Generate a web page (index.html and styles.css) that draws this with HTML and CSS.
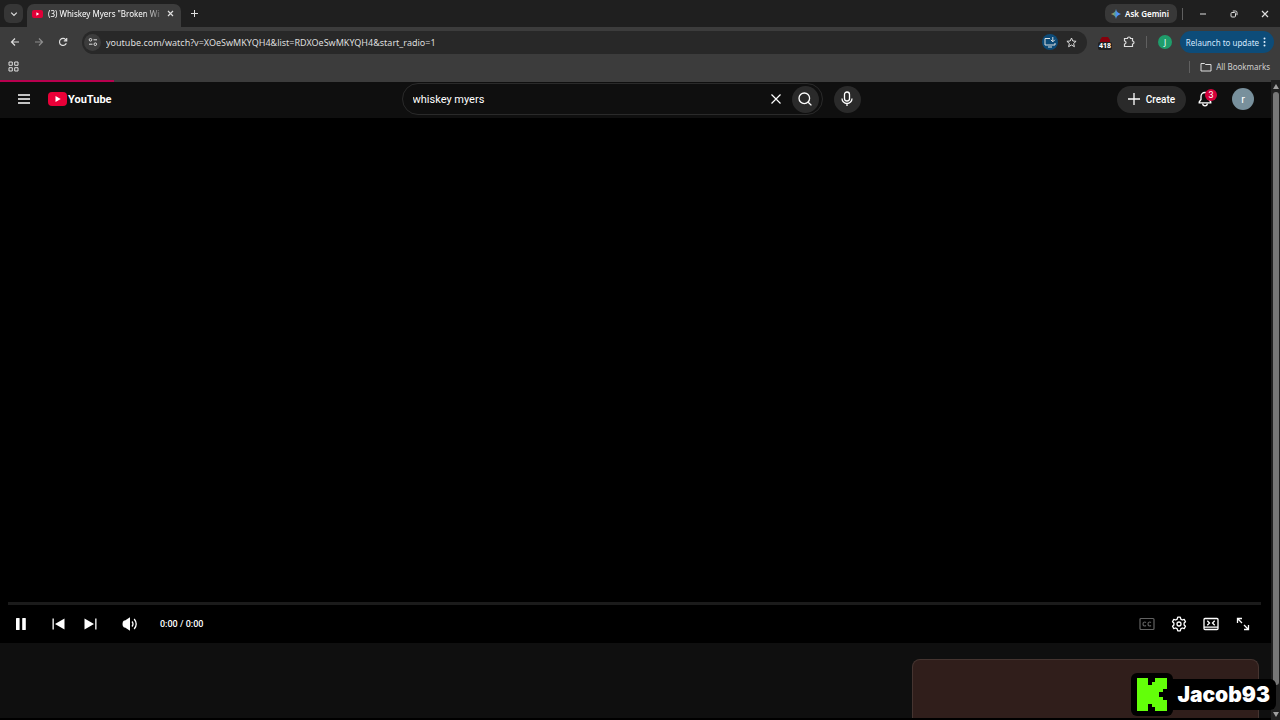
FILE: index.html
```html
<!DOCTYPE html>
<html lang="en">
<head>
<meta charset="utf-8">
<title>YouTube</title>
<link rel="stylesheet" href="styles.css">
</head>
<body>
<div class="tabstrip">
  <button class="tab-search" aria-label="Search tabs"><svg width="8" height="8" viewBox="0 0 8 8"><path d="M1.200 2.600 4 5.400l2.800-2.800" class="line strong"/></svg></button>
  <div class="tab">
    <svg width="11" height="8" viewBox="0 0 11 8"><rect width="11" height="8" rx="2" fill="#e00038"/><path d="M4.400 2.300v3.400L7.200 4z" fill="#fff"/></svg>
    <span class="tab-title">(3) Whiskey Myers "Broken Win</span>
    <button class="tab-close" aria-label="Close tab"><svg width="7" height="7" viewBox="0 0 7 7"><path d="m1 1 5 5M6 1 1 6" class="line strong"/></svg></button>
  </div>
  <button class="new-tab" aria-label="New tab"><svg width="9" height="9" viewBox="0 0 9 9"><path d="M4.500 1v7M1 4.500h7" class="line"/></svg></button>
  <div class="window-tools">
    <button class="gemini"><svg width="10" height="10" viewBox="0 0 10 10"><defs><linearGradient id="gem" x1="0" y1="0" x2="1" y2="0"><stop offset="0" stop-color="#e8a33c"/><stop offset=".35" stop-color="#5b9f8e"/><stop offset=".6" stop-color="#4b8df8"/><stop offset="1" stop-color="#5aa5ff"/></linearGradient></defs><path d="M5 0c.6 2.800 2.200 4.400 5 5-2.800.6-4.400 2.200-5 5-.6-2.800-2.200-4.400-5-5 2.800-.6 4.400-2.200 5-5z" fill="url(#gem)"/></svg>Ask Gemini</button>
    <span class="divider"></span>
    <button class="win" aria-label="Minimize"><svg width="8" height="8" viewBox="0 0 8 8"><path d="M1 4h6" class="line"/></svg></button>
    <button class="win" aria-label="Restore"><svg width="8" height="8" viewBox="0 0 8 8"><rect x="1" y="2.500" width="4.500" height="4.500" rx="1" class="line"/><path d="M2.800 1h2.700Q7 1 7 2.500v2.700" class="line"/></svg></button>
    <button class="win" aria-label="Close"><svg width="8" height="8" viewBox="0 0 8 8"><path d="m1 1 6 6M7 1 1 7" class="line strong"/></svg></button>
  </div>
</div>
<div class="toolbar">
  <button class="nav" aria-label="Back"><svg width="10" height="10" viewBox="0 0 10 10"><path d="M9 5H1.500M5 1.500 1.500 5 5 8.500" class="line strong"/></svg></button>
  <button class="nav dim" aria-label="Forward"><svg width="10" height="10" viewBox="0 0 10 10"><path d="M1 5h7.500M5 1.500 8.500 5 5 8.500" class="line strong"/></svg></button>
  <button class="nav" aria-label="Reload"><svg width="10" height="10" viewBox="0 0 10 10"><path d="M8.300 6.200A3.500 3.500 0 1 1 7.700 2.700L8.700 3.700M8.700 1v2.900H5.800" class="line strong"/></svg></button>
  <div class="address">
    <button class="site" aria-label="Site information"><svg width="10" height="10" viewBox="0 0 10 10"><circle cx="2.500" cy="2.800" r="1.300" class="line"/><path d="M5.500 2.800H9M1 7.200h3.500" class="line"/><circle cx="7.300" cy="7.200" r="1.300" class="line"/></svg></button>
    <input class="url" aria-label="Address" value="youtube.com/watch?v=XOeSwMKYQH4&amp;list=RDXOeSwMKYQH4&amp;start_radio=1">
    <button class="install" aria-label="Install app"><svg width="12" height="11" viewBox="0 0 12 11"><path d="M6 1.500H1v6.500h10V6M4 10h4M8.800 0v4.500M6.800 2.800l2 2 2-2" class="line"/></svg></button>
    <button class="star" aria-label="Bookmark this tab"><svg width="11" height="11" viewBox="0 0 11 11"><path d="m5.500 1 1.300 3 3.300.3-2.500 2.200.8 3.200-2.900-1.700-2.900 1.700.8-3.200L.9 4.300 4.200 4z" class="line"/></svg></button>
  </div>
  <button class="ext" aria-label="Ad blocker"><svg width="10" height="5" viewBox="0 0 10 5"><path d="M2 0h6l2 3v2H0V3z" fill="#86000c"/></svg><span>418</span></button>
  <button class="nav" aria-label="Extensions"><svg width="12" height="12" viewBox="0 0 12 12"><path d="M1.500 2.500h3Q4.500 1 6 1t1.500 1.500h2V5Q11 5 11 6.500T9.500 8v2.500h-8V8Q3 8 3 6.500T1.500 5z" class="line strong"/></svg></button>
  <span class="divider"></span>
  <button class="profile" aria-label="Profile">J</button>
  <button class="relaunch">Relaunch to update<svg width="3" height="10" viewBox="0 0 3 10" fill="#e4f1ff"><circle cx="1.500" cy="1.500" r="1"/><circle cx="1.500" cy="5" r="1"/><circle cx="1.500" cy="8.500" r="1"/></svg></button>
</div>
<div class="bookmarks">
  <button class="nav" aria-label="Apps"><svg width="11" height="11" viewBox="0 0 11 11"><path d="M1 1h3.300v3.300H1zM6.700 1H10v3.300H6.700zM1 6.700h3.300V10H1zM6.700 6.700H10V10H6.700z" class="line"/></svg></button>
  <span class="divider push"></span>
  <button class="all"><svg width="12" height="10" viewBox="0 0 12 10"><path d="M1 1.500h3.500l1 1H11V9H1z" class="line"/></svg>All Bookmarks</button>
</div>
<div class="view">
  <div class="page">
    <div class="track"><div class="loading"></div></div>
    <header class="masthead">
      <div class="brand">
        <button class="menu" aria-label="Guide"><svg width="12" height="10" viewBox="0 0 12 10"><path d="M0 1h12M0 5h12M0 9h12" stroke="#fff" stroke-width="1.400"/></svg></button>
        <a class="logo" href="#"><svg width="19" height="14" viewBox="0 0 19 14"><rect width="19" height="14" rx="4" fill="#e90038"/><path d="M7.500 4v6L12.700 7z" fill="#fff"/></svg>YouTube</a>
      </div>
      <div class="finder">
        <form class="search">
          <input class="query" aria-label="Search" value="whiskey myers">
          <button type="button" class="clear" aria-label="Clear"><svg width="12" height="12" viewBox="0 0 12 12"><path d="m1.500 1.500 9 9M10.500 1.500l-9 9" stroke="#fff" stroke-width="1.200"/></svg></button>
          <button type="button" class="go" aria-label="Search"><svg width="14" height="14" viewBox="0 0 14 14"><circle cx="6.300" cy="6.300" r="5.300" class="white"/><path d="m10.200 10.200 3.200 3.200" class="white"/></svg></button>
        </form>
        <button class="mic" aria-label="Voice search"><svg width="12" height="16" viewBox="0 0 12 16"><rect x="3.500" y="1" width="5" height="9" rx="2.500" class="white"/><path d="M1 7.500a5 5 0 0 0 10 0M6 12.500V15" class="white"/></svg></button>
      </div>
      <div class="account">
        <button class="create"><svg width="12" height="12" viewBox="0 0 12 12"><path d="M6 0v12M0 6h12" stroke="#fff" stroke-width="1.300"/></svg>Create</button>
        <button class="bell" aria-label="Notifications"><svg width="14" height="16" viewBox="0 0 14 16"><path d="M7 1.500c-2.500 0-4 1.800-4 4V8.500L1.200 11v.8h11.600V11L11 8.500v-3C11 3.300 9.500 1.500 7 1.500z" class="white"/><path d="M4.700 12.500a2.300 2.300 0 0 0 4.600 0" class="white"/></svg><span class="count">3</span></button>
        <button class="avatar" aria-label="Account">r</button>
      </div>
    </header>
    <main class="player">
      <div class="progress"></div>
      <div class="controls">
        <button class="pause" aria-label="Pause"><svg width="10" height="12" viewBox="0 0 10 12" fill="#fff"><rect width="3.600" height="12" rx=".6"/><rect x="6.200" width="3.600" height="12" rx=".6"/></svg></button>
        <button class="prev" aria-label="Previous"><svg width="13" height="12" viewBox="0 0 13 12" fill="#fff"><path d="M.5.5h1.300v11H.5zM12.500.5v11L3 6z"/></svg></button>
        <button class="next" aria-label="Next"><svg width="13" height="12" viewBox="0 0 13 12" fill="#fff"><path d="M11.200.5h1.300v11h-1.300zM.5.5v11L10 6z"/></svg></button>
        <button class="volume" aria-label="Mute"><svg width="16" height="14" viewBox="0 0 16 14"><path d="M8 .3v13.400L3 10.500H2Q.5 10 .5 7T2 3.500h1z" fill="#fff"/><path d="M10 4.500q2 2.500 0 5M12.200 2q4 5 0 10" class="white"/></svg></button>
        <span class="time">0:00 / 0:00</span>
        <div class="options">
          <button aria-label="Subtitles"><svg width="16" height="14" viewBox="0 0 16 14" fill="none" stroke="#626262" stroke-width="1.200"><rect x="1" y="1.500" width="14" height="11" rx="1"/><path d="M7 5.500Q6.500 5 5.500 5 4 5 4 7t1.500 2Q6.500 9 7 8.500M12 5.500Q11.500 5 10.500 5 9 5 9 7t1.500 2q1 0 1.500-.5"/></svg></button>
          <button aria-label="Settings"><svg width="16" height="16" viewBox="0 0 16 16"><path d="M6.700 1.200h2.600l.5 1.900 1.500.9 1.900-.6 1.300 2.300L13.100 7v2l1.400 1.300-1.300 2.300-1.900-.6-1.500.9-.5 1.900H6.700l-.5-1.900-1.500-.9-1.900.6-1.300-2.300L2.900 9V7L1.500 5.700l1.300-2.300 1.900.6 1.500-.9z" class="white" stroke-linejoin="round"/><circle cx="8" cy="8" r="2" class="white"/></svg></button>
          <button aria-label="Default view"><svg width="16" height="14" viewBox="0 0 16 14"><rect x="1" y="1.500" width="14" height="11" rx="1" class="white"/><path d="M1 10.200h14M4.300 3.800 6.500 6 4.300 8.200M11.700 3.800 9.500 6l2.200 2.200" class="white"/></svg></button>
          <button aria-label="Full screen"><svg width="14" height="14" viewBox="0 0 14 14"><path d="M1.500 6V1.500H6M1.500 1.500 6 6M12.500 8v4.500H8M12.500 12.500 8 8" class="white"/></svg></button>
        </div>
      </div>
    </main>
    <section class="below"><aside class="panel"></aside></section>
  </div>
  <div class="scrollbar">
    <svg width="6" height="5" viewBox="0 0 6 5"><path d="M3 0l3 5H0z" fill="#a0a0a0"/></svg>
    <div class="thumb"></div>
    <svg width="6" height="5" viewBox="0 0 6 5"><path d="M3 5l3-5H0z" fill="#a0a0a0"/></svg>
  </div>
</div>
<div class="watermark">
  <div class="kick"><svg width="30" height="33" viewBox="0 0 30 33"><path d="M0 0h11v7h4V4h3V0h12v11h-4v3h-4v5h4v3h4v11H18v-4h-3v-3h-4v7H0z" fill="#63ff09"/></svg></div>
  <span class="handle">Jacob93</span>
</div>
</body>
</html>
```
FILE: styles.css
```css
* { box-sizing: border-box; }
body { margin: 0; height: 100vh; display: flex; flex-direction: column; overflow: hidden; background: #0f0f0f; color: #fff; font-family: "Noto Sans", sans-serif; font-size: 8px; }
button, input { font: inherit; color: inherit; border: 0; background: none; padding: 0; margin: 0; outline: 0; min-width: 0; }
button { display: flex; align-items: center; justify-content: center; flex: none; }
svg { flex: none; display: block; }
.line { fill: none; stroke: #dedede; stroke-width: 1; }
.strong { stroke-width: 1.2; }
.white { fill: none; stroke: #fff; stroke-width: 1.3; }
.divider { width: 1px; height: 12px; background: #606060; flex: none; }

.tabstrip { flex: none; height: 27px; display: flex; align-items: center; padding-left: 4px; background: #1f1f1f; }
.tab-search { width: 19px; height: 19px; border-radius: 6px; background: #363636; }
.tab { align-self: flex-end; width: 154px; height: 23px; margin-left: 4px; padding: 0 6px 4px 5px; display: flex; align-items: center; gap: 5px; border-radius: 7px 7px 0 0; background: #3c3c3c; }
.tab-title { flex: 1; min-width: 0; white-space: nowrap; mask-image: linear-gradient(90deg, #000 85%, rgba(0, 0, 0, .3)); }
.tab-close { width: 10px; height: 10px; }
.new-tab { width: 27px; height: 20px; }
.window-tools { margin-left: auto; display: flex; align-items: center; }
.gemini { width: 72px; height: 19px; gap: 4px; padding-right: 2px; border-radius: 7px; background: #383838; font-weight: 600; margin-right: 5px; }
.win { width: 31px; height: 20px; }
.window-tools .divider { margin-right: 4px; }

.toolbar { flex: none; height: 30px; display: flex; align-items: center; padding: 0 6px 0 3px; background: #3c3c3c; }
.nav { width: 24px; height: 20px; }
.dim { opacity: .5; }
.address { flex: 1; height: 23px; margin: 0 8px 0 7px; padding: 0 8px 0 2px; display: flex; align-items: center; gap: 5px; border-radius: 12px; background: #282828; }
.site { width: 17px; height: 17px; border-radius: 9px; background: #3c3c3c; }
.url { flex: 1; height: 20px; color: #dedede; font-size: 9px; }
.install { width: 16px; height: 16px; border-radius: 8px; background: #0c4a77; }
.star { width: 16px; height: 16px; }
.ext { width: 20px; flex-direction: column; padding-top: 3px; }
.ext span { padding: 0 1px; border-radius: 2px; background: #202020; font-size: 7px; line-height: 8px; font-weight: 700; }
.toolbar .ext + .nav { margin-left: 2px; margin-right: 5px; }
.profile { width: 14px; height: 14px; margin: 0 8px 0 11px; border-radius: 7px; background: #1f9d6b; }
.relaunch { width: 94px; height: 22px; gap: 4px; padding-right: 2px; border-radius: 11px; background: #0d4c79; color: #d5e9ff; }

.bookmarks { flex: none; height: 23px; padding: 0 10px 4px 1px; display: flex; align-items: center; background: #3c3c3c; }
.push { margin-left: auto; }
.all { margin-left: 10px; gap: 4px; color: #d0d0d0; }

.view { flex: 1; min-height: 0; display: flex; }
.page { flex: 1; min-width: 0; display: flex; flex-direction: column; border-bottom: 2px solid #000; }
.track { flex: none; background: #3c3c3c; }
.loading { height: 2px; width: 9%; background: #b8004e; }
.masthead { flex: none; height: 36px; display: grid; grid-template-columns: 1fr auto 1fr; align-items: center; padding: 0 17px 2px 16px; font-family: Roboto, sans-serif; }
.brand, .finder, .account { display: flex; align-items: center; }
.brand { gap: 16px; }
.menu { width: 16px; height: 20px; }
.logo { display: flex; align-items: center; gap: 1px; color: #fff; text-decoration: none; font-weight: 700; font-size: 11px; }
.finder { gap: 11px; margin-right: 8px; }
.search { width: 421px; height: 32px; display: flex; align-items: center; padding: 0 3px 0 10px; border: 1px solid #2a2a2a; border-radius: 16px; }
.query { flex: 1; height: 24px; font-size: 11px; }
.clear { width: 20px; height: 20px; margin-right: 6px; }
.go, .mic { width: 27px; height: 27px; border-radius: 14px; background: #2a2a2a; }
.account { justify-content: flex-end; }
.create { width: 69px; height: 27px; gap: 6px; border-radius: 14px; background: #2a2a2a; font-size: 10px; font-weight: 500; }
.bell { position: relative; width: 22px; height: 22px; margin: 0 16px 0 8px; }
.count { position: absolute; top: 1px; right: -1px; width: 12px; height: 12px; border-radius: 6px; background: #d4003a; font-size: 9px; line-height: 12px; }
.avatar { width: 22px; height: 22px; border-radius: 11px; background: #78909c; font-size: 11px; }

.player { flex: 1; min-height: 0; display: flex; flex-direction: column; justify-content: flex-end; background: #000; padding: 0 10px 0 8px; }
.progress { height: 3px; background: #1b1b1b; }
.controls { height: 38px; display: flex; align-items: center; padding: 0 2px 0 0; }
.pause { width: 26px; height: 32px; }
.prev { width: 32px; height: 32px; margin-left: 8px; }
.next { width: 32px; height: 32px; }
.volume { width: 32px; height: 32px; margin-left: 8px; }
.time { margin-left: 14px; font-family: Roboto, sans-serif; font-size: 9px; font-weight: 500; }
.options { margin-left: auto; display: flex; }
.options button { width: 32px; height: 32px; }
.below { flex: none; height: 75px; display: flex; justify-content: flex-end; padding: 16px 12px 0 0; }
.panel { width: 347px; border: 1px solid #453430; border-bottom: 0; border-radius: 8px 8px 0 0; background: #301e1b; }

.scrollbar { width: 9px; flex: none; display: flex; flex-direction: column; align-items: center; gap: 3px; padding: 4px 0 3px; background: #202020; }
.thumb { width: 6px; flex: 1; margin-bottom: 24px; border-radius: 3px; background: #777; }

.watermark { position: absolute; right: 4px; bottom: 4px; display: flex; align-items: center; font-family: Inter, sans-serif; }
.kick { width: 42px; height: 43px; display: flex; align-items: center; justify-content: center; border-radius: 6px; background: #000; }
.handle { height: 31px; padding: 0 6px 0 4px; border-radius: 0 6px 6px 0; background: #000; font-size: 21px; line-height: 31px; font-weight: 900; }
```
